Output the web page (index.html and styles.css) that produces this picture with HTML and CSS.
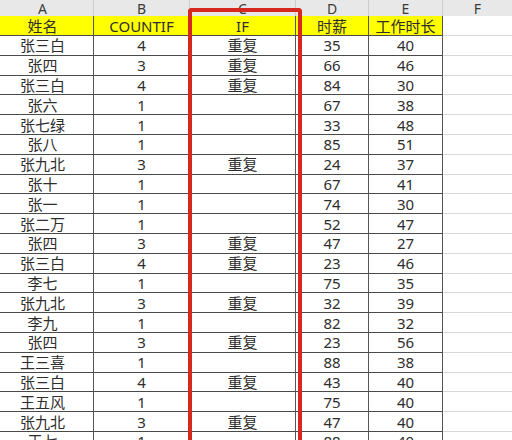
FILE: index.html
```html
<!DOCTYPE html>
<html>
<head>
<meta charset="utf-8">
<link rel="stylesheet" href="styles.css">
</head>
<body>
<div class="sheet">
  <div class="row hdr"><div>A</div><div>B</div><div>C</div><div>D</div><div>E</div><div>F</div></div>
  <div class="row title"><div>姓名</div><div>COUNTIF</div><div>IF</div><div>时薪</div><div>工作时长</div><div></div></div>
  <div class="row"><div>张三白</div><div>4</div><div>重复</div><div>35</div><div>40</div><div></div></div>
  <div class="row"><div>张四</div><div>3</div><div>重复</div><div>66</div><div>46</div><div></div></div>
  <div class="row"><div>张三白</div><div>4</div><div>重复</div><div>84</div><div>30</div><div></div></div>
  <div class="row"><div>张六</div><div>1</div><div></div><div>67</div><div>38</div><div></div></div>
  <div class="row"><div>张七绿</div><div>1</div><div></div><div>33</div><div>48</div><div></div></div>
  <div class="row"><div>张八</div><div>1</div><div></div><div>85</div><div>51</div><div></div></div>
  <div class="row"><div>张九北</div><div>3</div><div>重复</div><div>24</div><div>37</div><div></div></div>
  <div class="row"><div>张十</div><div>1</div><div></div><div>67</div><div>41</div><div></div></div>
  <div class="row"><div>张一</div><div>1</div><div></div><div>74</div><div>30</div><div></div></div>
  <div class="row"><div>张二万</div><div>1</div><div></div><div>52</div><div>47</div><div></div></div>
  <div class="row"><div>张四</div><div>3</div><div>重复</div><div>47</div><div>27</div><div></div></div>
  <div class="row"><div>张三白</div><div>4</div><div>重复</div><div>23</div><div>46</div><div></div></div>
  <div class="row"><div>李七</div><div>1</div><div></div><div>75</div><div>35</div><div></div></div>
  <div class="row"><div>张九北</div><div>3</div><div>重复</div><div>32</div><div>39</div><div></div></div>
  <div class="row"><div>李九</div><div>1</div><div></div><div>82</div><div>32</div><div></div></div>
  <div class="row"><div>张四</div><div>3</div><div>重复</div><div>23</div><div>56</div><div></div></div>
  <div class="row"><div>王三喜</div><div>1</div><div></div><div>88</div><div>38</div><div></div></div>
  <div class="row"><div>张三白</div><div>4</div><div>重复</div><div>43</div><div>40</div><div></div></div>
  <div class="row"><div>王五风</div><div>1</div><div></div><div>75</div><div>40</div><div></div></div>
  <div class="row"><div>张九北</div><div>3</div><div>重复</div><div>47</div><div>40</div><div></div></div>
  <div class="row"><div>王七</div><div>1</div><div></div><div>88</div><div>40</div><div></div></div>
  <div class="redbox"></div>
</div>
</body>
</html>
```
FILE: styles.css
```css
html, body {
  margin: 0;
  padding: 0;
  background: #fff;
  overflow: hidden;
}
.sheet {
  position: relative;
  margin-left: -8px;
  width: 520px;
  height: 440px;
  overflow: hidden;
  font-family: "Noto Sans", "Noto Sans CJK SC", sans-serif;
  font-size: 15px;
  color: #2e2e2e;
}
.row {
  display: grid;
  grid-template-columns: 102px 96px 106px 73px 74px 69px;
  height: 19.8px;
}
.row > div {
  box-sizing: border-box;
  border-right: 1px solid #555;
  border-bottom: 1px solid #4a4a4a;
  display: flex;
  align-items: center;
  justify-content: center;
  line-height: 18px;
  white-space: nowrap;
}
.row > div:last-child {
  border-right: none;
  border-bottom: 1px solid #dadada;
}
.hdr {
  height: 16px;
  background: #e8e8e8;
  color: #3a3a3a;
  font-size: 14px;
}
.hdr > div {
  border-right: 1px solid #cdcdcd;
  border-bottom: none;
  line-height: 15px;
}
.hdr > div:last-child {
  border-bottom: none;
}
.title {
  height: 20px;
}
.title > div {
  background: #ffff00;
}
.title > div:last-child {
  background: #fff;
}
.redbox {
  position: absolute;
  left: 196px;
  top: 8px;
  width: 114px;
  height: 460px;
  box-sizing: border-box;
  border: 4px solid #d6281f;
  border-bottom: none;
  border-radius: 4px 4px 0 0;
}
```
